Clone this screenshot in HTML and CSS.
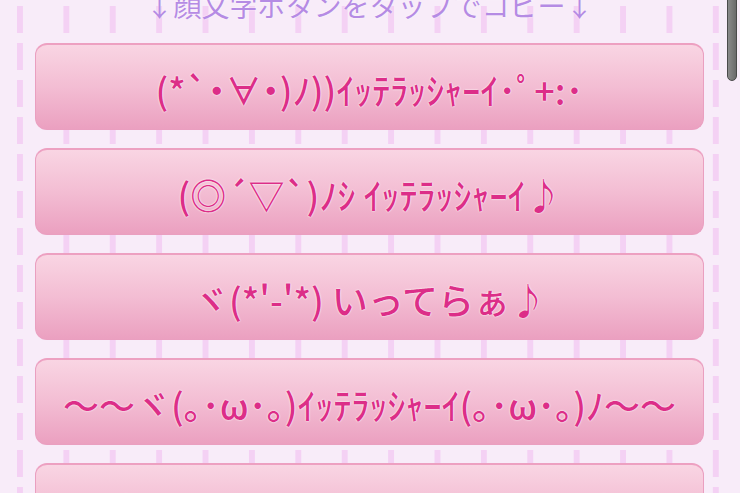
FILE: index.html
```html
<!DOCTYPE html>
<html lang="ja">
<head>
<meta charset="utf-8">
<title>顔文字</title>
<link rel="stylesheet" href="styles.css">
</head>
<body>
<div class="page">
  <p class="lead">↓顔文字ボタンをタップでコピー↓</p>
  <div class="list">
    <button class="kao kao-tight">(*`・∀・)ﾉ))ｲｯﾃﾗｯｼｬｰｲ･ﾟ+:･</button>
    <button class="kao">(◎´▽`)ﾉｼ ｲｯﾃﾗｯｼｬｰｲ♪</button>
    <button class="kao">ヾ(*'-'*) いってらぁ♪</button>
    <button class="kao">～～ヾ(｡･ω･｡)ｲｯﾃﾗｯｼｬｰｲ(｡･ω･｡)ﾉ～～</button>
    <button class="kao">ﾟ･*:.｡ﾛ(･∀･)ﾉ ｲｯﾃﾗｯｼｬｰｲ ｡.:*･ﾟ</button>
  </div>
</div>
<div class="scrollbar"></div>
</body>
</html>
```
FILE: styles.css
```css
html, body {
  margin: 0;
  padding: 0;
}
body {
  height: 493px;
  overflow: hidden;
  background-color: #f8ecf9;
  background-image:
    linear-gradient(180deg, rgba(248,236,249,0) 0 27px, #f8ecf9 27px 37px),
    linear-gradient(90deg, #f4d1f4 0 6px, rgba(244,209,244,0) 6px);
  background-size: 100% 37px, 46.4px 100%;
  background-position: 0 6px, 17px 0;
  font-family: "Noto Sans CJK JP", "Noto Sans", sans-serif;
}
.page {
  padding: 0 36px 0 35px;
}
.lead {
  margin: -13px 0 20px;
  font-size: 28px;
  line-height: 36px;
  text-align: center;
  color: #b58be4;
  text-shadow: 0 0 2px rgba(255,255,255,0.8);
  white-space: nowrap;
}
.list {
  display: flex;
  flex-direction: column;
  gap: 18px;
}
.kao {
  display: block;
  width: 100%;
  height: 87px;
  box-sizing: border-box;
  margin: 0;
  padding: 4px 0 0;
  border: 1px solid #ea9fc0;
  border-top: 2px solid #eda0c1;
  border-radius: 12px;
  background: linear-gradient(180deg, #f9d5e3 0%, #f3bdd3 50%, #eba0c0 100%);
  color: #dc2e88;
  font-family: "Noto Sans CJK JP", "Noto Sans", sans-serif;
  font-size: 36px;
  font-weight: 500;
  line-height: 44px;
  text-align: center;
  white-space: nowrap;
  text-shadow: 0 0 2px #fff, 0 0 1px #fff;
}
.kao-tight {
  font-feature-settings: "palt" 1;
}
.scrollbar {
  position: absolute;
  right: 3px;
  top: -10px;
  width: 8px;
  height: 89px;
  background: linear-gradient(90deg, #8a8a8a, #777 60%, #6a6a6a);
  border: 1px solid #4a4a4a;
  border-radius: 5px;
}
```
